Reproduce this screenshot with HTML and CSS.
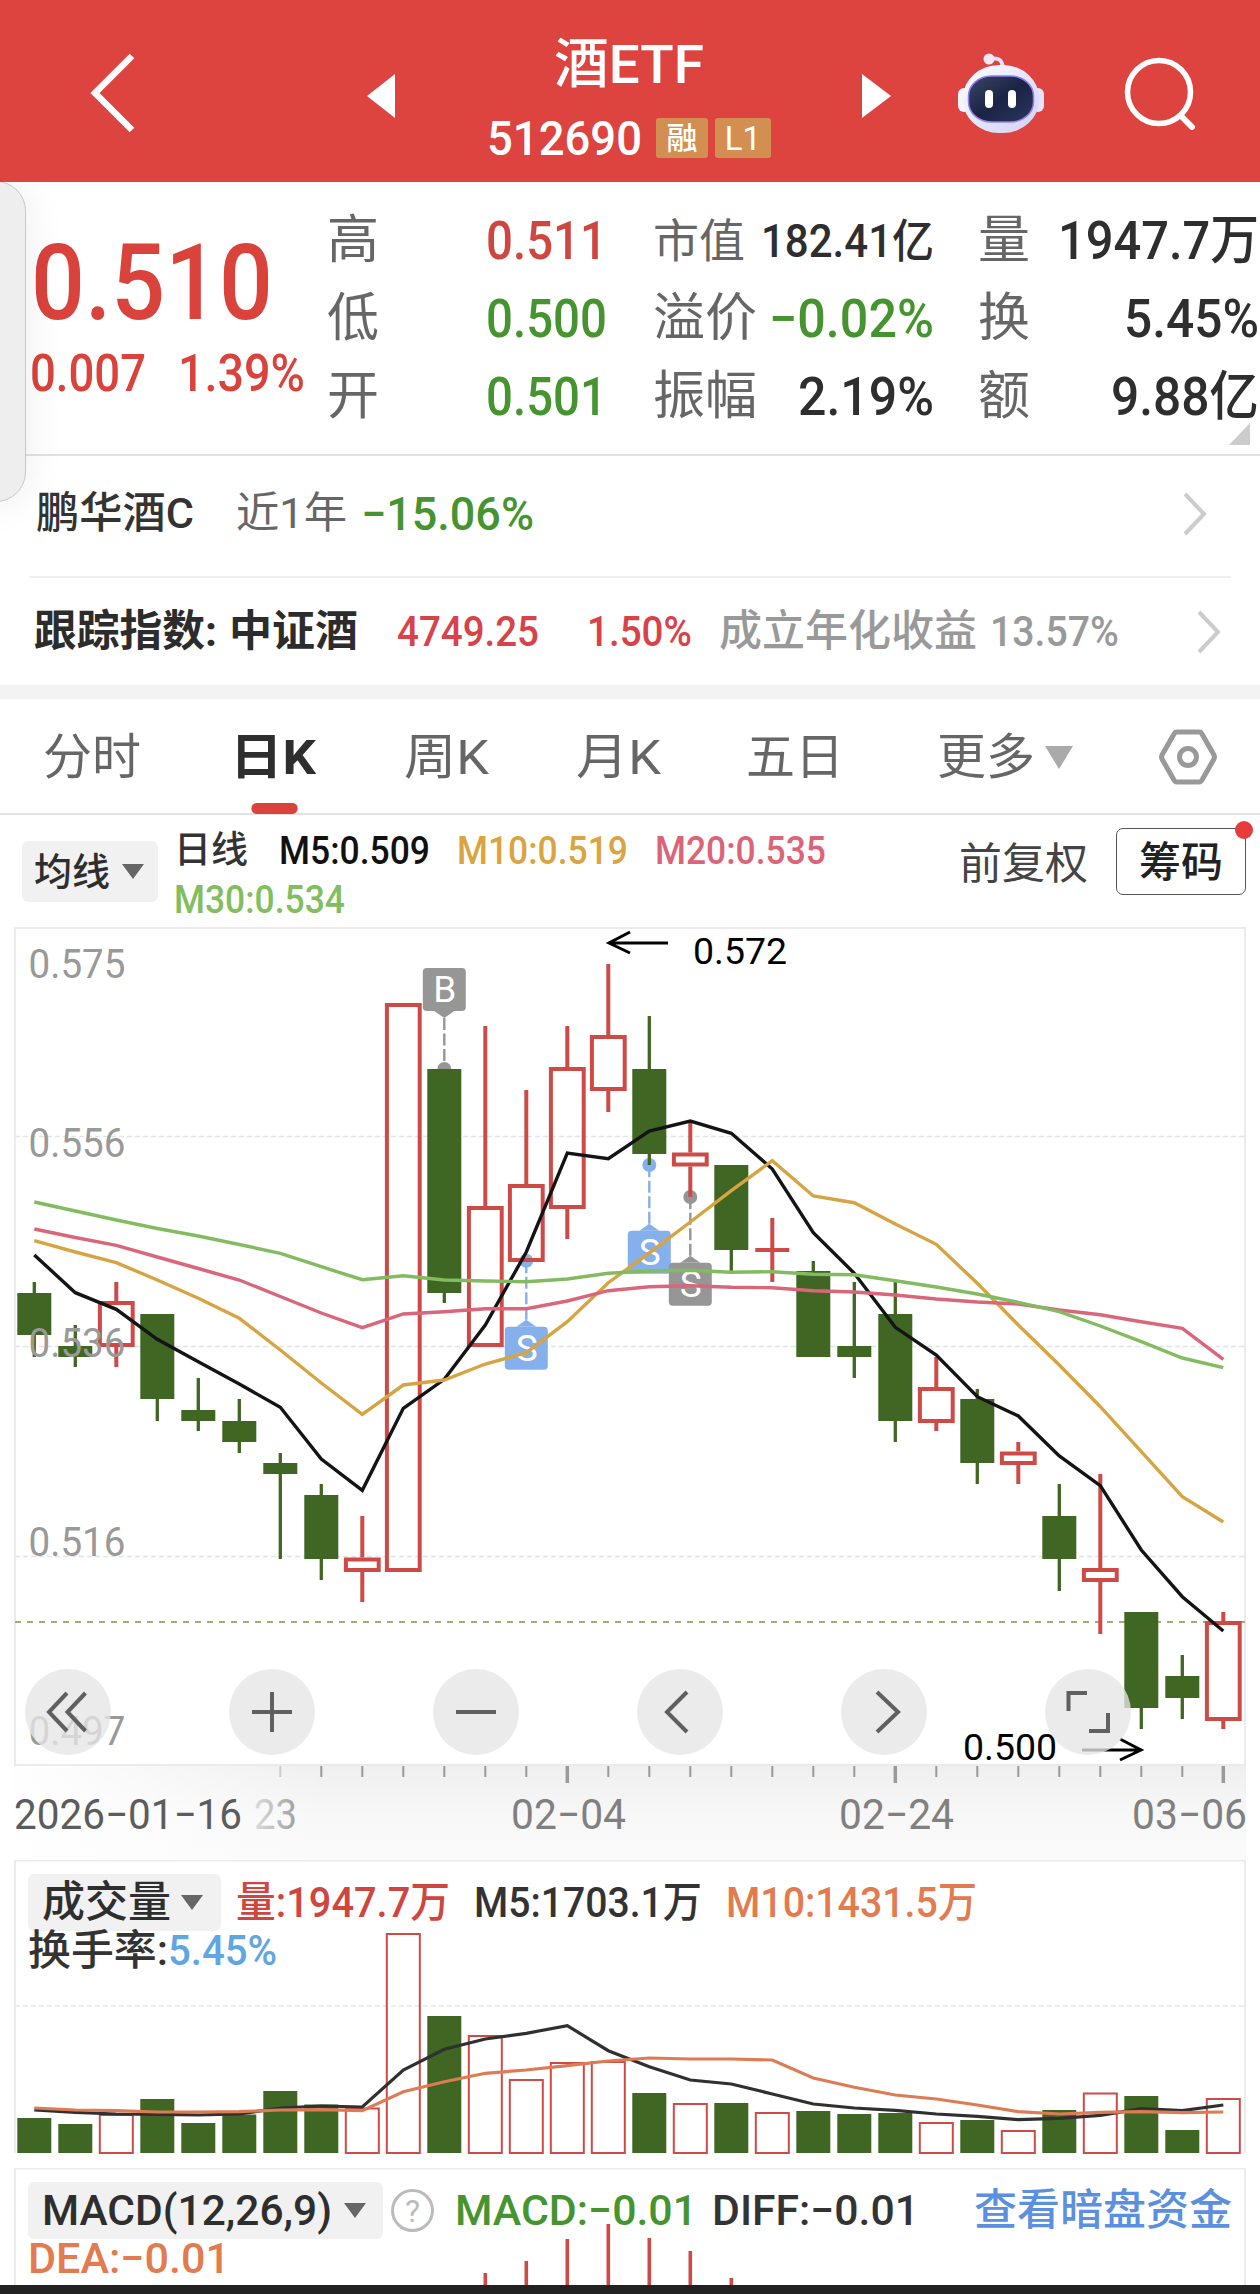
FILE: index.html
```html
<!DOCTYPE html>
<html lang="zh-CN">
<head>
    <meta charset="UTF-8">
    <meta name="viewport" content="width=device-width, initial-scale=1.0">
    <title>酒ETF 512690</title>
    <link rel="stylesheet" href="styles.css">
</head>
<body>
    <header class="header">
        <svg class="back" width="52" height="86" viewBox="0 0 52 86"><path d="M45 6 8 43l37 37" fill="none" stroke="#fff" stroke-width="6.5"/></svg>
        <svg class="prev" width="28" height="44" viewBox="0 0 28 44"><path d="M28 0v44L0 22z" fill="#fff"/></svg>
        <div class="title">
            <h1><span data-w="150">酒ETF</span></h1>
            <div class="code">
                <span class="code-num" data-w="155">512690</span>
                <span class="badge">融</span>
                <span class="badge badge-l1">L1</span>
            </div>
        </div>
        <svg class="next" width="29" height="44" viewBox="0 0 29 44"><path d="M0 0v44l29-22z" fill="#fff"/></svg>
        <svg class="robot" width="88" height="82" viewBox="0 0 88 82">
            <defs>
                <linearGradient id="shell" x1="0" y1="0" x2="1" y2="1">
                    <stop offset="0" stop-color="#fff"/>
                    <stop offset=".55" stop-color="#e3e4fb"/>
                    <stop offset="1" stop-color="#d3d0f3"/>
                </linearGradient>
                <linearGradient id="face" x1="0" y1="0" x2="1" y2="1">
                    <stop offset="0" stop-color="#3b4668"/>
                    <stop offset=".5" stop-color="#1b2444"/>
                    <stop offset="1" stop-color="#2b3562"/>
                </linearGradient>
            </defs>
            <path d="M33 7c9-2 12 1 13 9" fill="none" stroke="#e6defa" stroke-width="4"/>
            <circle cx="32" cy="7" r="5.5" fill="#f3e9f5"/>
            <rect x="1" y="36" width="12" height="24" rx="6" fill="#f6f3ff"/>
            <rect x="75" y="36" width="12" height="24" rx="6" fill="#e6e2fb"/>
            <rect x="6" y="13" width="76" height="68" rx="36" ry="33" fill="url(#shell)"/>
            <rect x="11.500" y="24" width="65" height="46" rx="23" ry="20" fill="url(#face)" stroke="#8f80ee" stroke-width="1.5"/>
            <rect x="28" y="38" width="8" height="18" rx="4" fill="#fff"/>
            <rect x="51" y="38" width="8" height="18" rx="4" fill="#fff"/>
        </svg>
        <svg class="search" width="76" height="74" viewBox="0 0 76 74"><circle cx="37" cy="36" r="31.5" fill="none" stroke="#fff" stroke-width="5.5"/><path d="M59 60l11 11" stroke="#fff" stroke-width="6" stroke-linecap="round"/></svg>
    </header>

    <section class="quote">
        <div class="price">
            <span class="price-now" data-w="242">0.510</span>
            <div class="price-diff">
                <span data-w="116">0.007</span>
                <span data-w="127">1.39%</span>
            </div>
        </div>
        <div class="labels"><span>高</span><span>低</span><span>开</span></div>
        <div class="values">
            <span class="red" data-w="121">0.511</span>
            <span class="green" data-w="121">0.500</span>
            <span class="green" data-w="121">0.501</span>
        </div>
        <div class="pairs">
            <div><span class="label small">市值</span><span class="small value" data-w="173">182.41亿</span></div>
            <div><span class="label">溢价</span><span class="green value" data-w="165">−0.02%</span></div>
            <div><span class="label">振幅</span><span class="value" data-w="136">2.19%</span></div>
        </div>
        <div class="pairs">
            <div><span class="label">量</span><span class="value" data-w="201">1947.7万</span></div>
            <div><span class="label">换</span><span class="value" data-w="135">5.45%</span></div>
            <div><span class="label">额</span><span class="value" data-w="148">9.88亿</span></div>
        </div>
        <i class="corner"></i>
        <i class="drawer"></i>
    </section>

    <section class="fund">
        <span class="dark" data-w="158">鹏华酒C</span>
        <span class="mid" data-w="111">近1年</span>
        <span class="green value big" data-w="173">−15.06%</span>
        <svg width="24" height="44" viewBox="0 0 24 44"><path d="M2 2l19 20L2 42" fill="none" stroke="#ccc" stroke-width="4"/></svg>
    </section>
    <section class="index">
        <span class="strong" data-w="183">跟踪指数:</span>
        <span class="strong">中证酒</span>
        <span class="crimson" data-w="142">4749.25</span>
        <span class="crimson" data-w="105">1.50%</span>
        <span class="soft">成立年化收益</span>
        <span class="soft" data-w="129">13.57%</span>
        <svg width="24" height="44" viewBox="0 0 24 44"><path d="M2 2l19 20L2 42" fill="none" stroke="#ccc" stroke-width="4"/></svg>
    </section>

    <nav class="tabs">
        <span>分时</span>
        <span class="active" data-w="86">日K</span>
        <span data-w="85">周K</span>
        <span data-w="85">月K</span>
        <span>五日</span>
        <span class="more">更多<svg width="28" height="23" viewBox="0 0 28 23"><path d="M0 0h28L14 23z" fill="#aaa"/></svg></span>
        <svg width="60" height="56" viewBox="0 0 60 56"><path d="M19 3h22q2 0 3 2l12 21q1 2 0 4L44 51q-1 2-3 2H19q-2 0-3-2L4 30q-1-2 0-4L16 5q1-2 3-2z" fill="none" stroke="#999" stroke-width="5"/><circle cx="30" cy="28" r="8.5" fill="none" stroke="#999" stroke-width="5"/></svg>
    </nav>

    <section class="ma">
        <span class="chip"><span>均线</span><i class="caret"></i></span>
        <div class="ma-list">
            <div class="ma-row">
                <span class="ma-day">日线</span>
                <span class="m5" data-w="151">M5:0.509</span>
                <span class="m10" data-w="171">M10:0.519</span>
                <span class="m20" data-w="171">M20:0.535</span>
            </div>
            <div class="ma-row">
                <span class="m30" data-w="171">M30:0.534</span>
            </div>
        </div>
        <span class="adjust">前复权</span>
        <span class="chips-btn">筹码</span>
    </section>

    <svg class="kline" id="kline" width="1260" height="943" viewBox="0 917 1260 943">
        <defs>
            <linearGradient id="fade" x1="0" y1="0" x2="0" y2="1">
                <stop offset="0" stop-color="#efefef"/>
                <stop offset=".55" stop-color="#f8f8f8"/>
                <stop offset="1" stop-color="#fafafa"/>
            </linearGradient>
            <linearGradient id="fadeLeft">
                <stop offset="0" stop-color="#fff"/>
                <stop offset="1" stop-color="#fff" stop-opacity="0"/>
            </linearGradient>
            <linearGradient id="fadeText">
                <stop offset="0" stop-color="#ddd"/>
                <stop offset="1" stop-color="#a0a0a0"/>
            </linearGradient>
        </defs>
    </svg>

    <section class="panel volume">
        <svg id="volume" width="1260" height="308" viewBox="0 1860 1260 308"></svg>
        <div class="legend">
            <div class="legend-row">
                <span class="chip"><span>成交量</span><i class="caret"></i></span>
                <span class="red" data-w="214">量:1947.7万</span>
                <span class="dark" data-w="228">M5:1703.1万</span>
                <span class="orange" data-w="251">M10:1431.5万</span>
            </div>
            <div class="legend-row second">
                <span class="dark heavy" data-w="140">换手率:</span>
                <span class="blue" data-w="109">5.45%</span>
            </div>
        </div>
    </section>

    <section class="panel macd">
        <svg id="macd" width="1260" height="117" viewBox="0 2168 1260 117"></svg>
        <div class="legend">
            <div class="legend-row">
                <span class="chip"><span data-w="290">MACD(12,26,9)</span><i class="caret"></i></span>
                <span class="help">?</span>
                <span class="green" data-w="242">MACD:−0.01</span>
                <span class="dark" data-w="207">DIFF:−0.01</span>
                <span class="link">查看暗盘资金</span>
            </div>
            <div class="legend-row second">
                <span class="orange" data-w="202">DEA:−0.01</span>
            </div>
        </div>
    </section>
    <footer class="bottom"></footer>

    <script src="chart.js"></script>
</body>
</html>
```
FILE: styles.css
```css
* {
    box-sizing: border-box;
}

body {
    margin: 0;
    width: 1260px;
    height: 2294px;
    overflow: hidden;
    background: #fff;
    color: #333;
    font-family: Roboto, "Noto Sans CJK SC", sans-serif;
    font-weight: 500;
    line-height: 1;
    white-space: nowrap;
}

span[data-w] {
    display: inline-block;
    justify-self: start;
    transform-origin: 0 50%;
}

svg {
    display: block;
}

.red { color: #cf4540; }
.green { color: #46942f; }
.crimson { color: #d8434a; }
.orange { color: #e27b4f; }
.blue { color: #5fa6e2; }
.dark { color: #333; }
.mid { color: #666; font-weight: 400; }
.soft { color: #999; }
.strong { color: #2c2c2c; font-weight: 700; }
.value { color: #2e2e2e; }
.value.green { color: #46942f; }

/* header */
.header {
    display: grid;
    grid-template-columns: 280px 120px 375px 95px 165px 1fr;
    align-items: center;
    height: 182px;
    padding-left: 87px;
    background: #dd433f;
    color: #fff;
}

.back,
.robot,
.search {
    margin-top: 3px;
}

.prev,
.next {
    margin-top: 9px;
}

.title {
    padding-top: 18px;
}

.header h1 {
    margin: 0 0 0 67px;
    font-size: 54px;
    font-weight: 500;
}

.code {
    display: flex;
    align-items: center;
    margin-top: 22px;
}

.code-num {
    font-size: 49px;
}

.badge {
    width: 52px;
    height: 40px;
    margin-left: 14px;
    border-radius: 3px;
    background: #d38f52;
    font-size: 31px;
    line-height: 41px;
    text-align: center;
}

.badge-l1 {
    width: 56px;
    margin-left: 7px;
    font-size: 33px;
    font-weight: 400;
}

/* quote */
.quote {
    position: relative;
    display: grid;
    grid-template-columns: 327px 159px 167px 281px 44px 281px;
    height: 274px;
    border-bottom: 2px solid #e2e2e2;
    font-size: 53px;
}

.quote .pairs:nth-child(5) {
    grid-column: 6;
}

.price {
    padding: 48px 0 0 31px;
    color: #d9433b;
}

.price-now {
    font-size: 106px;
}

.price-diff {
    display: flex;
    gap: 32px;
    margin: 12px 0 0 -1px;
    font-size: 51px;
}

.labels,
.values,
.pairs {
    display: grid;
    grid-template-rows: repeat(3, 78px);
    align-items: center;
    align-content: start;
    padding-top: 20px;
}

.labels,
.label {
    color: #666;
    font-weight: 400;
    font-size: 52px;
}

.pairs > div {
    display: flex;
    justify-content: space-between;
    align-items: center;
}

.quote .small {
    font-size: 46px;
}

.corner {
    position: absolute;
    right: 10px;
    bottom: 9px;
    border-left: 21px solid transparent;
    border-bottom: 22px solid #ccc;
}

.drawer {
    position: absolute;
    left: -34px;
    top: -1px;
    width: 60px;
    height: 321px;
    border: 1.5px solid #c8c8c8;
    border-radius: 48px;
    background: #eee;
    box-shadow: 0 0 40px rgba(0, 0, 0, 0.08);
    clip-path: inset(1px -60px -60px 0);
}

/* fund and index rows */
.fund,
.index {
    display: grid;
    align-items: center;
    font-size: 43px;
}

.fund {
    grid-template-columns: 200px 125px 822px 24px;
    height: 122px;
    margin: 0 29px;
    padding: 0 0 5px 7px;
    border-bottom: 2px solid #f0f0f0;
}

.fund .big {
    font-size: 46px;
}

.index {
    grid-template-columns: 195px 168px 190px 132px 271px 207px 24px;
    height: 107px;
    padding-left: 34px;
}

/* tabs */
.tabs {
    display: grid;
    grid-template-columns: 187px 174px 172px 170px 191px 221px 60px;
    align-items: center;
    height: 130px;
    padding: 2px 0 0 43px;
    border-top: 14px solid #f3f3f3;
    border-bottom: 2px solid #e2e2e2;
    color: #666;
    font-size: 49px;
    font-weight: 400;
}

.tabs .active {
    color: #2e2e2e;
    font-weight: 700;
}

.tabs .active::after {
    content: "";
    position: absolute;
    left: 20px;
    top: 70px;
    width: 43px;
    height: 11px;
    border-radius: 5px;
    background: #d9433b;
}

.more {
    display: flex;
    align-items: center;
    gap: 10px;
}

/* averages */
.ma {
    display: grid;
    grid-template-columns: 152px 785px 157px 130px;
    height: 102px;
    padding-left: 22px;
}

.chip {
    display: flex;
    align-items: center;
    gap: 12px;
    border-radius: 6px;
    background: #f1f1f1;
    color: #2e2e2e;
}

.caret {
    border: 11px solid transparent;
    border-top: 15px solid #666;
    border-bottom: 0;
}

.ma .chip {
    align-self: start;
    width: 136px;
    height: 61px;
    margin-top: 26px;
    padding-left: 12px;
    font-size: 38px;
}

.ma-list {
    padding-top: 17px;
    font-size: 39px;
}

.ma-row {
    display: flex;
    gap: 27px;
    height: 49px;
}

.ma-day {
    width: 78px;
    font-size: 37px;
}

.m5 { color: #111; }
.m10 { color: #d9a441; }
.m20 { color: #dc6478; }
.m30 { color: #82bd5e; }

.adjust {
    padding-top: 28px;
    color: #444;
    font-size: 43px;
    font-weight: 400;
}

.chips-btn {
    position: relative;
    height: 67px;
    margin-top: 13px;
    border: 1.5px solid #555;
    border-radius: 7px;
    color: #222;
    font-size: 42px;
    line-height: 68px;
    text-align: center;
}

.chips-btn::after {
    content: "";
    position: absolute;
    right: -8px;
    top: -8px;
    width: 18px;
    height: 18px;
    border-radius: 50%;
    background: #e93b3b;
}

/* lower panels */
.panel {
    display: grid;
}

.panel > * {
    grid-area: 1 / 1;
}

.legend {
    padding: 14px 0 0 28px;
    font-size: 42px;
}

.legend-row {
    display: flex;
    align-items: center;
    height: 57px;
}

.legend-row.second {
    height: 39px;
}

.legend .chip {
    height: 57px;
    padding: 0 17px 0 14px;
    font-size: 43px;
}

.volume .chip {
    width: 193px;
    gap: 10px;
    margin-right: 15px;
}

.volume .legend-row .dark:not(.heavy),
.volume .legend-row .dark + .orange {
    margin-left: 24px;
}

.macd .chip {
    width: 355px;
    font-size: 42px;
}

.help {
    width: 43px;
    height: 43px;
    margin: 0 21px 0 8px;
    border: 3px solid #bbb;
    border-radius: 50%;
    color: #bbb;
    font-size: 32px;
    font-weight: 400;
    line-height: 38px;
    text-align: center;
}

.macd .legend-row .dark {
    margin-left: 15px;
}

.link {
    margin-left: 55px;
    color: #5b8fe0;
    font-size: 43px;
}

.kline text {
    font-weight: 400;
}

.bottom {
    height: 9px;
    background: #222;
}
```
FILE: chart.js
```js
const STEP = 41;
const X0 = 34.3;
const RED = '#cd4a46';
const GREEN = '#3f6622';
const NS = 'http://www.w3.org/2000/svg';

function add(parent, tag, attrs, text) {
    const el = document.createElementNS(NS, tag);
    for (const key in attrs) {
        el.setAttribute(key, attrs[key]);
    }
    if (text) {
        el.textContent = text;
    }
    parent.appendChild(el);
    return el;
}

function cx(i) {
    return X0 + STEP * i;
}

function line(svg, points, color, width) {
    const pts = points.map((y, i) => `${cx(i)},${y}`).join(' ');
    add(svg, 'polyline', { points: pts, fill: 'none', stroke: color, 'stroke-width': width });
}

function path(svg, d, color, width, extra) {
    add(svg, 'path', Object.assign({ d, fill: 'none', stroke: color, 'stroke-width': width }, extra));
}

function label(svg, x, y, w, text, size, color) {
    add(svg, 'text', { x, y, textLength: w, lengthAdjust: 'spacingAndGlyphs', 'font-size': size, fill: color }, text);
}

// [color, high, body top, body bottom, low]
const candles = [
    ['g', 1282, 1293, 1335, 1357], ['g', 1325, 1346, 1357, 1367], ['r', 1282, 1301, 1347, 1367],
    ['g', 1314, 1314, 1399, 1421], ['g', 1378, 1410, 1421, 1431], ['g', 1399, 1421, 1442, 1453],
    ['g', 1453, 1463, 1474, 1559], ['g', 1484, 1495, 1559, 1580], ['r', 1516, 1557.5, 1572, 1602],
    ['r', 1003, 1003, 1572, 1572], ['g', 1069, 1069, 1293, 1303], ['r', 1026, 1206, 1347, 1347],
    ['r', 1090, 1184, 1262, 1262], ['r', 1026, 1067, 1209, 1239], ['r', 964, 1035, 1091, 1112],
    ['g', 1016, 1069, 1154, 1165], ['r', 1120, 1152.5, 1166.5, 1197], ['g', 1165, 1165, 1250, 1271],
    ['r', 1218, 1250, 1250, 1282], ['g', 1261, 1271, 1357, 1357], ['g', 1282, 1346, 1357, 1378],
    ['g', 1282, 1314, 1421, 1442], ['r', 1357, 1387, 1423, 1431], ['g', 1389, 1399, 1463, 1484],
    ['r', 1442, 1451.5, 1465, 1484], ['g', 1484, 1516, 1559, 1591], ['r', 1474, 1568, 1582, 1634],
    ['g', 1612, 1612, 1708, 1729], ['g', 1655, 1676, 1698, 1719], ['r', 1612, 1621, 1721, 1729]
];

const m5 = [1255, 1292.7, 1309.3, 1339.3, 1361.7, 1384, 1407.3, 1459, 1490.3, 1408.3, 1379.3, 1325, 1252, 1153, 1158.7,
    1131, 1121, 1133.3, 1169, 1232.7, 1273.3, 1327.3, 1355, 1396.7, 1416, 1456, 1485.7, 1550, 1596.7, 1631];
const m10 = [1240.7, 1252, 1262.7, 1280, 1298.3, 1318.3, 1350, 1383, 1414.3, 1385, 1380, 1364, 1352.7, 1321.7, 1282.7,
    1253, 1222, 1190.7, 1160.7, 1196, 1202.7, 1224, 1244.3, 1283.3, 1325, 1365, 1406.7, 1451.7, 1496.7, 1522];
const m20 = [1229, 1237.5, 1245.3, 1257, 1268.5, 1280, 1296.5, 1313, 1327.7, 1314, 1311.7, 1308.7, 1308.7, 1301, 1290.7,
    1286.7, 1285.7, 1287.3, 1287.7, 1290.7, 1292, 1295, 1299, 1302, 1304, 1310, 1314.7, 1321.7, 1328.3, 1359.3];
const m30 = [1202, 1211, 1220, 1228.5, 1236, 1244.5, 1253.3, 1266.7, 1279.7, 1275.7, 1280, 1281, 1281.7, 1279, 1273.3,
    1271, 1270.3, 1272.3, 1271.7, 1274.3, 1274.7, 1280.7, 1287, 1294, 1302.3, 1311.7, 1326, 1341.7, 1358, 1367.7];

// trade marks: i = candle index, dot = traded price, box = top of the tag
const marks = [
    { i: 10, dot: 1069, box: 968, text: 'B', color: '#969696', down: true },
    { i: 12, dot: 1260.7, box: 1326.7, text: 'S', color: '#86b0ec' },
    { i: 15, dot: 1165, box: 1230.7, text: 'S', color: '#86b0ec' },
    { i: 16, dot: 1197, box: 1262.7, text: 'S', color: '#969696' }
];

function drawKline() {
    const svg = document.getElementById('kline');

    add(svg, 'rect', { x: 14, y: 1766, width: 1232, height: 94, fill: 'url(#fade)' });
    add(svg, 'rect', { x: 0, y: 1766, width: 330, height: 94, fill: 'url(#fadeLeft)' });
    add(svg, 'rect', { x: 15, y: 928, width: 1230, height: 837, fill: '#fff', stroke: '#ebebeb', 'stroke-width': 2 });
    [1136.5, 1346.5, 1556.5].forEach(y => path(svg, `M15 ${y}H1245`, '#e4e4e4', 1.3, { 'stroke-dasharray': '5 3' }));
    path(svg, 'M15 1622H1245', '#a9a878', 2, { 'stroke-dasharray': '6 6' });

    marks.forEach(m => {
        add(svg, 'circle', { cx: cx(m.i), cy: m.dot, r: 7, fill: m.color });
        const from = m.down ? 1018 : m.box - 7;
        path(svg, `M${cx(m.i)} ${from}V${m.dot}`, m.color, 2.4, { 'stroke-dasharray': '12 3.5' });
    });

    candles.forEach(([c, high, top, bottom, low], i) => {
        const x = cx(i);
        if (c === 'g') {
            path(svg, `M${x} ${high}V${low}`, GREEN, 3.3);
            add(svg, 'rect', { x: x - 17, y: top, width: 34, height: bottom - top, fill: GREEN });
        } else if (top === bottom) {
            path(svg, `M${x} ${high}V${low}M${x - 17} ${top}H${x + 17}`, RED, 4);
        } else {
            path(svg, `M${x} ${high}V${top}M${x} ${bottom}V${low}`, RED, 4);
            add(svg, 'rect', { x: x - 16.4, y: top + 2, width: 32.8, height: bottom - top - 4, fill: 'none', stroke: RED, 'stroke-width': 4 });
        }
    });

    marks.forEach(m => {
        const x = cx(m.i);
        const tip = m.down ? `M${x - 10} ${m.box + 43}h20l-10 7z` : `M${x - 10} ${m.box}h20l-10-7z`;
        add(svg, 'rect', { x: x - 21.5, y: m.box, width: 43, height: 43, rx: 4, fill: m.color });
        add(svg, 'path', { d: tip, fill: m.color });
        add(svg, 'text', { x: x + 0.5, y: m.box + 34, 'text-anchor': 'middle', 'font-size': 37, fill: '#fff' }, m.text);
    });

    line(svg, m5, '#141414', 3.4);
    line(svg, m10, '#d6a443', 3.4);
    line(svg, m20, '#d9667a', 3.4);
    line(svg, m30, '#82bb60', 3.4);

    [['0.575', 978], ['0.556', 1156.5], ['0.536', 1356.5], ['0.516', 1555.5], ['0.497', 1745]].forEach(([t, y]) => label(svg, 28.5, y, 97, t, 41, '#999'));

    path(svg, 'M668 943H609M630 932L609 943L630 953', '#000', 3);
    label(svg, 693, 963.5, 94, '0.572', 37, '#000');
    path(svg, 'M1082 1750H1141M1120 1739L1141 1750L1120 1760', '#000', 3);
    label(svg, 963, 1760, 94, '0.500', 37, '#000');

    // round tool buttons
    const icons = [
        'M67 1693L49 1712L67 1731M85.500 1693L67.500 1712L85.500 1731',
        'M252 1712H292M272 1692V1732',
        'M456 1712H496',
        'M687 1692L667 1712L687 1732',
        'M877 1692L898 1712L877 1732',
        'M1068.500 1711V1693H1087M1089 1731H1108V1713'
    ];
    icons.forEach((d, i) => {
        add(svg, 'circle', { cx: 68 + 204 * i, cy: 1712, r: 43, fill: '#e6e6e6', 'fill-opacity': 0.78 });
        path(svg, d, '#606060', 4);
    });

    for (let i = 6; i < 30; i++) {
        const major = i === 13 || i === 21 || i === 29;
        path(svg, `M${cx(i)} 1766V${major ? 1783 : 1777}`, i === 6 ? '#ccc' : '#999', major ? 3.5 : 2);
    }
    label(svg, 14, 1829, 228, '2026−01−16', 42, '#5c5c5c');
    label(svg, 254, 1829, 43, '23', 42, 'url(#fadeText)');
    label(svg, 511, 1829, 115, '02−04', 42, '#808080');
    label(svg, 839, 1829, 115, '02−24', 42, '#808080');
    label(svg, 1132, 1829, 115, '03−06', 42, '#808080');
}

const volumes = [2118, 2124, 2114, 2099, 2123, 2114.5, 2091, 2104.5, 2107.5, 1933, 2016, 2035, 2079, 2062, 2061,
    2093, 2103, 2103, 2112, 2111, 2114, 2113, 2122, 2120, 2130, 2110, 2092.5, 2096, 2130, 2098];
const v5 = [2110, 2112.3, 2114, 2114.3, 2115, 2114, 2108, 2106, 2107, 2070, 2049.3, 2039, 2033.3, 2025.7, 2050.7,
    2066.7, 2080, 2084, 2094, 2104, 2108, 2110.3, 2114, 2116.3, 2119.7, 2118.3, 2115.3, 2108.7, 2110.7, 2105];
const v10 = [2108, 2110, 2110.7, 2112, 2112, 2111.7, 2110, 2109.7, 2110.7, 2091.7, 2081.7, 2073.3, 2070, 2065.7, 2061,
    2058, 2059, 2059, 2060, 2078, 2087.3, 2095, 2099, 2105, 2111.7, 2114, 2112.3, 2111.7, 2112.7, 2112];

function drawVolume() {
    const svg = document.getElementById('volume');
    path(svg, 'M15 2153V1860.5H1245V2153', '#ebebeb', 2);
    path(svg, 'M15 2006H1245', '#e8e8e8', 1.5, { 'stroke-dasharray': '5 3' });
    volumes.forEach((top, i) => {
        if (candles[i][0] === 'g') {
            add(svg, 'rect', { x: cx(i) - 17, y: top, width: 34, height: 2153 - top, fill: GREEN });
        } else {
            add(svg, 'rect', { x: cx(i) - 16.5, y: top + 1, width: 33, height: 2152 - top, fill: 'none', stroke: RED, 'stroke-width': 2 });
        }
    });
    line(svg, v5, '#303030', 3.2);
    line(svg, v10, '#dd7b54', 3.2);
}

function drawMacd() {
    const svg = document.getElementById('macd');
    path(svg, 'M15 2285V2168.500H1245V2285', '#ebebeb', 2);
    [2273, 2261, 2239, 2224, 2238, 2251, 2278].forEach((top, i) => path(svg, `M${cx(i + 11)} ${top}V2285`, RED, 3.6));
}

// squeeze each marked text to its column width
function fitTexts() {
    document.querySelectorAll('span[data-w]').forEach(el => {
        const natural = el.getBoundingClientRect().width;
        const w = Number(el.dataset.w);
        el.style.transform = `scaleX(${w / natural})`;
        el.style.marginRight = `${w - natural}px`;
    });
}

fitTexts();
drawKline();
drawVolume();
drawMacd();
```
